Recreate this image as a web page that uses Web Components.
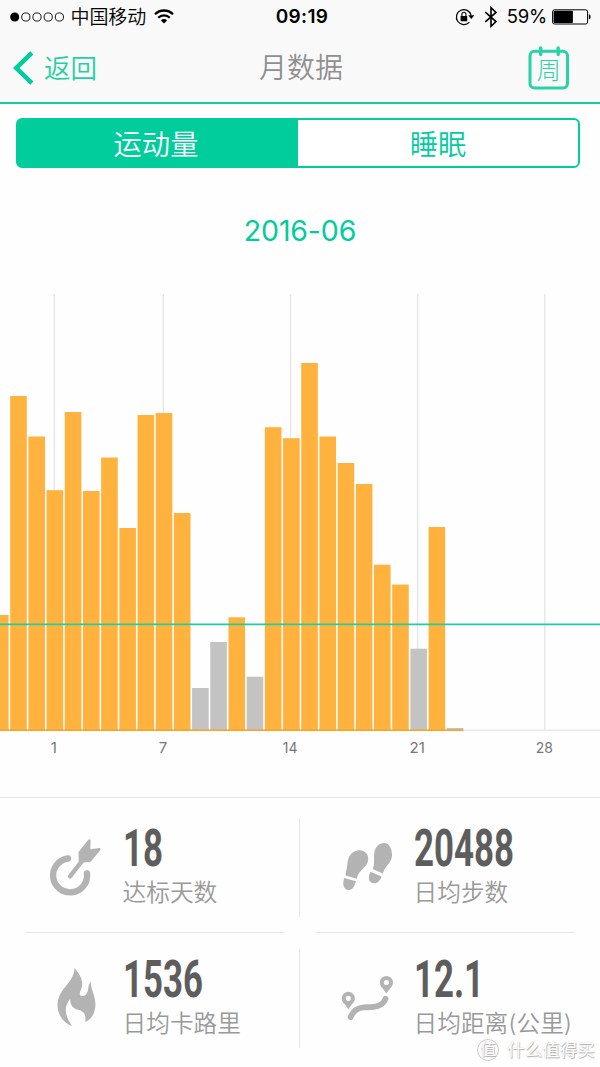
<!DOCTYPE html>
<html lang="zh-CN">
<head>
<meta charset="utf-8">
<title>月数据</title>
<style>
  html, body {
    margin: 0;
    padding: 0;
  }
  body {
    width: 600px;
    height: 1067px;
    overflow: hidden;
    background: #fefefe;
    font-family: Inter, "Noto Sans CJK SC", sans-serif;
    --green: #00cd9b;
    --line: #e4e8e8;
  }
</style>
</head>
<body>
<month-page></month-page>

<script>
function makeTemplate(html) {
  const template = document.createElement('template');
  template.innerHTML = html;
  return template;
}

class BaseElement extends HTMLElement {
  constructor() {
    super();
    const shadow = this.attachShadow({ mode: 'open' });
    shadow.append(this.constructor.template.content.cloneNode(true));
  }
}

class StatusBar extends BaseElement {
  static template = makeTemplate(`
    <style>
    :host {
      display: grid;
      grid-template-columns: 1fr auto 1fr;
      align-items: center;
      height: 33px;
      padding: 0 9px 0 10px;
      color: #000;
      font-size: 19px;
      line-height: 33px;
    }
    .side {
      display: flex;
      align-items: center;
      height: 33px;
    }
    .right {
      justify-content: flex-end;
    }
    .carrier {
      margin: 0 8px 0 6.5px;
      padding-top: 1px;
      font-weight: 350;
      letter-spacing: -0.1px;
    }
    .time {
      font-weight: 600;
      font-size: 19px;
      letter-spacing: 0.3px;
      padding-left: 3px;
    }
    .percent {
      font-size: 18.5px;
      margin: 0 5px 0 9px;
      letter-spacing: -0.2px;
    }
    svg {
      display: block;
      flex: none;
    }
    </style>
    <div class="side">
      <svg width="54" height="10" viewBox="0 0 54 10">
        <circle cx="4.7" cy="5" r="4.5"/>
        <g fill="none" stroke="#000" stroke-width="0.9">
          <circle cx="15.8" cy="5" r="4.1"/><circle cx="27" cy="5" r="4.1"/>
          <circle cx="38.2" cy="5" r="4.1"/><circle cx="49.4" cy="5" r="4.1"/>
        </g>
      </svg>
      <span class="carrier">中国移动</span>
      <svg width="20" height="15" viewBox="0 0 20 15">
        <g fill="none" stroke="#000" stroke-width="2.3">
          <path d="M1 5.2A12.8 12.8 0 0 1 19 5.2"/>
          <path d="M4.2 8.7A8.2 8.2 0 0 1 15.8 8.7"/>
        </g>
        <path d="M6.9 11.4A4.4 4.4 0 0 1 13.1 11.4L10 14.4Z"/>
      </svg>
    </div>
    <div class="time">09:19</div>
    <div class="side right">
      <svg width="20" height="18" viewBox="0 0 20 18">
        <path d="M14.4 14.2A7.5 7.5 0 1 1 16.2 7.4" fill="none" stroke="#000" stroke-width="1.2"/>
        <path d="M13.2 7.3h6.2l-3.1 3.7Z"/>
        <rect x="5.6" y="8" width="6.6" height="5.2" rx="0.5"/>
        <path d="M6.9 8V6.3a2 2 0 0 1 4 0V8" fill="none" stroke="#000" stroke-width="1.1"/>
      </svg>
      <svg width="14" height="22" viewBox="0 0 14 22" style="margin-left: 9px">
        <path d="M1.3 6.2L12 15.6L7 20.3V1.7L12 6.4L1.3 15.8" fill="none" stroke="#000" stroke-width="1.6"/>
      </svg>
      <span class="percent">59%</span>
      <svg width="39" height="16" viewBox="0 0 39 16">
        <rect x="0.6" y="0.8" width="35" height="14.2" rx="2" fill="none" stroke="#000" stroke-width="1"/>
        <rect x="1.6" y="1.8" width="19.3" height="12.2" rx="0.8"/>
        <path d="M36.9 5.2Q38.6 5.6 38.6 7.9T36.9 10.6Z"/>
      </svg>
    </div>
  `);
}

class NavBar extends BaseElement {
  static template = makeTemplate(`
    <style>
    :host {
      display: grid;
      grid-template-columns: 1fr auto 1fr;
      align-items: center;
      height: 69px;
      padding: 0 30px 0 13px;
      border-bottom: 2px solid #1ccaa0;
      font-weight: 350;
      font-size: 26.5px;
      line-height: 67px;
      color: #8f8f8f;
    }
    .back {
      display: flex;
      align-items: center;
      gap: 10px;
      height: 69px;
      color: #1fd0a3;
    }
    .back span {
      padding-top: 1px;
    }
    .title {
      font-size: 28px;
      padding: 1px 0 0 19px;
    }
    .week {
      justify-self: end;
    }
    svg {
      display: block;
    }
    </style>
    <div class="back">
      <svg width="21" height="34" viewBox="0 0 21 34">
        <path d="M18.8 1.8L3.2 17L18.8 32.2" fill="none" stroke="#00cd9b" stroke-width="4.6"/>
      </svg>
      <span><slot name="back"></slot></span>
    </div>
    <div class="title"><slot></slot></div>
    <svg class="week" width="42" height="44" viewBox="0 0 42 44">
      <g fill="none" stroke="#2ad2a7" stroke-linecap="round">
        <rect x="2" y="5.3" width="37.5" height="36.7" rx="4.5" stroke-width="3"/>
        <path d="M12.7 2V8.5M30.2 2V8.5" stroke-width="3.4"/>
      </g>
      <text x="20.8" y="33" text-anchor="middle" font-size="24" font-weight="300" fill="#2ad2a7">周</text>
    </svg>
  `);
}

class SegmentControl extends BaseElement {
  static template = makeTemplate(`
    <style>
    :host {
      display: flex;
      box-sizing: border-box;
      height: 50px;
      margin: 14px 20.5px 0 15.5px;
      border: 2px solid var(--green);
      border-radius: 6px;
      overflow: hidden;
      background: linear-gradient(90deg, var(--green) 50%, #fff 50%);
      font-weight: 350;
      font-size: 28.3px;
      line-height: 50px;
      text-align: center;
      color: var(--green);
    }
    .on, .off {
      flex: 1;
    }
    .on {
      color: #fff;
      text-indent: -3px;
    }
    .off {
      text-indent: 1px;
    }
    </style>
    <div class="on"><slot name="active"></slot></div>
    <div class="off"><slot></slot></div>
  `);
}

// y of each bar's upper edge inside the 600x517 plot, bars stand on y = 450
const bars = [
  335, 116, 156.5, 210.2, 132, 211, 177.5, 248, 135, 133, 233, 408, 362,
  337.3, 396.7, 147.2, 158.2, 83, 156.5, 183, 204, 284.7, 304.6, 368.7, 247, 448
];
// a bar that stays under the goal line is grey
const goalY = 344.3;
const days = [[1, 54.3], [7, 163.3], [14, 290.5], [21, 417.6], [28, 544.8]];

class MonthChart extends BaseElement {
  static template = makeTemplate(`
    <style>
    :host {
      display: block;
      height: 517px;
    }
    svg {
      display: block;
    }
    text {
      font-size: 15px;
      fill: #777;
      text-anchor: middle;
    }
    text.small {
      font-size: 14px;
    }
    </style>
    <svg width="600" height="517" viewBox="0 0 600 517"></svg>
  `);

  connectedCallback() {
    const step = 18.19;
    const left = 10.2 - step;
    const grid = days.map(([, x]) =>
      `<path d="M${x} 14V450" stroke="#e6e6e6" stroke-width="1.4"/>`);
    const rects = bars.map((y, i) =>
      `<rect x="${(left + i * step).toFixed(2)}" y="${y}" width="16.6" height="${450 - y}" fill="${y > goalY ? '#c3c3c3' : '#ffb23e'}"/>`);
    const labels = days.map(([day, x]) =>
      `<text x="${x - 0.4}" y="473.3"${day === 28 || day === 14 ? ' class="small"' : ''}>${day}</text>`);
    this.shadowRoot.querySelector('svg').innerHTML = `
      ${grid.join('')}
      <path d="M463 450.2H600" stroke="#e6e6e6" stroke-width="1.3"/>
      ${rects.join('')}
      <path d="M0 450.2H463.3" stroke="#f5a327" stroke-width="1.5"/>
      <path d="M0 ${goalY}H600" stroke="#1fcfa0" stroke-width="1.8"/>
      ${labels.join('')}
    `;
  }
}

class StatItem extends BaseElement {
  static template = makeTemplate(`
    <style>
    :host {
      display: flex;
      box-sizing: border-box;
      align-items: flex-start;
      height: 131px;
      padding: 26px 0 0 var(--indent, 45px);
    }
    .text {
      padding-left: 17.5px;
      margin-top: var(--lift, 0);
    }
    .value {
      display: block;
      height: 49px;
      width: 120px;
      font: 700 52px/49px Roboto, sans-serif;
      color: #5d5d5d;
      transform: scaleX(0.67);
      transform-origin: 0 0;
      white-space: nowrap;
    }
    .label {
      display: block;
      margin-top: 3px;
      font-weight: 350;
      font-size: 23.7px;
      line-height: 34px;
      color: #999;
      white-space: nowrap;
    }
    ::slotted(svg) {
      display: block;
      flex: none;
      width: 60px;
      height: 80px;
    }
    </style>
    <slot name="icon"></slot>
    <div class="text">
      <span class="value"><slot name="value"></slot></span>
      <span class="label"><slot></slot></span>
    </div>
  `);
}

class StatGrid extends BaseElement {
  static template = makeTemplate(`
    <style>
    :host {
      display: grid;
      grid-template-columns: 299px 1px 300px;
      grid-template-rows: 134px 1.5px 134px;
      border-top: 1.5px solid var(--line);
    }
    .v {
      width: 1px;
      height: 99px;
      margin-top: 20px;
      background: var(--line);
    }
    .v.low {
      margin-top: 16px;
    }
    .h {
      margin: 0 15px 0 26px;
      background: var(--line);
    }
    .h.right {
      margin: 0 26px 0 16px;
    }
    </style>
    <slot name="a"></slot><div class="v"></div><slot name="b"></slot>
    <div class="h"></div><div></div><div class="h right"></div>
    <slot name="c"></slot><div class="v low"></div><slot name="d"></slot>
  `);
}

class WaterMark extends BaseElement {
  static template = makeTemplate(`
    <style>
    :host {
      position: absolute;
      left: 477px;
      top: 1037px;
      display: flex;
      align-items: center;
      gap: 8px;
      font-size: 17.6px;
      line-height: 26px;
      color: #fff;
      text-shadow: 0.7px 0.7px 1px #aaa, 0 0 1px #ccc;
      white-space: nowrap;
    }
    .badge {
      width: 20px;
      height: 20px;
      border: 1px solid #ccc;
      border-radius: 50%;
      line-height: 19px;
      font-size: 16px;
      text-align: center;
    }
    </style>
    <span class="badge">值</span><span>什么值得买</span>
  `);
}

class MonthPage extends BaseElement {
  static template = makeTemplate(`
    <style>
    :host {
      display: flex;
      flex-direction: column;
      position: relative;
      width: 600px;
      height: 1067px;
      overflow: hidden;
    }
    header {
      background: #f9f9f9;
    }
    .month {
      margin-top: 43px;
      height: 69px;
      line-height: 40px;
      font-size: 28.5px;
      letter-spacing: -0.15px;
      text-align: center;
      color: var(--green);
    }
    stat-item:nth-of-type(even) {
      --indent: 36px;
    }
    stat-item:nth-of-type(n+3) {
      --lift: -4px;
    }
    </style>
    <header>
      <status-bar></status-bar>
      <nav-bar><span slot="back">返回</span>月数据</nav-bar>
    </header>
    <segment-control><span slot="active">运动量</span>睡眠</segment-control>
    <div class="month">2016-06</div>
    <month-chart></month-chart>
    <stat-grid>
      <stat-item slot="a">
        <svg slot="icon" viewBox="45 824 60 80">
          <g fill="none" stroke="#b3b3b3" stroke-linecap="round">
            <path d="M68 858.5A17 17 0 1 0 87 873.5" stroke-width="6.4"/>
            <path d="M70 876.3L82 861" stroke-width="4.4"/>
          </g>
          <path d="M78.5 852L88.5 839.5Q90.5 838.5 90.6 841L90.3 849.2L99.5 848Q101.5 848.5 100 850.5L91.3 861Q90.5 862 89 862L83.5 862.5L78.8 864Z" fill="#b3b3b3"/>
        </svg>
        <span slot="value">18</span>达标天数
      </stat-item>
      <stat-item slot="b">
        <svg slot="icon" viewBox="336 824 60 80">
          <g fill="#b3b3b3">
            <path d="M345.5 875.5C346 871 346.8 869 347.4 863.5C348.2 855.5 353 850.3 359.5 850.3C366 850.3 369.2 856 368 861C366.7 866.5 361.5 869.5 358.8 873.5Q357.3 876 356.7 878.7Z"/>
            <path d="M344.3 878L355.8 881.2C355 886 352.5 889.8 348.8 889.9C344 889.8 341.8 885.5 344.3 878Z"/>
            <path d="M372.7 869C374.5 864.5 374 862 374 856C374 848 378.5 843 384 843C389.5 843.2 392.2 849 392 855.5C391.8 862 387 865 384.3 869.5L382.8 873.4Z"/>
            <path d="M370.5 871.8L381.6 876.4C380.2 880.5 377.5 883.3 373.8 883.3C368.8 883 367.3 878 370.5 871.8Z"/>
          </g>
        </svg>
        <span slot="value">20488</span>日均步数
      </stat-item>
      <stat-item slot="c">
        <svg slot="icon" viewBox="45 960 60 80">
          <path d="M74.5 969C79.5 975 83.5 981 81.8 988C80.5 993 79 994 80 996C81.5 998 86.5 997.5 87.8 992C88.5 988 88.5 985.5 90.5 982.5C91 991 96 998 95.4 1006.5C95 1015 91 1020.5 85.3 1023C86 1016 84.5 1012.5 79 1011C73 1009.5 70 1006.5 70.3 999.5C64.5 1006.5 63.5 1015 72 1027C62 1023.5 56.5 1013 57.6 1004C59.5 988.5 74 984 74.5 969Z" fill="#b3b3b3"/>
        </svg>
        <span slot="value">1536</span>日均卡路里
      </stat-item>
      <stat-item slot="d">
        <svg slot="icon" viewBox="336 960 60 80">
          <g fill="none" stroke="#b3b3b3">
            <path d="M350.6 1018C353 1012.5 357.5 1008.6 364 1008.3C372 1008 382 1009 385.5 999.8" stroke-width="5.8" stroke-linecap="round"/>
            <circle cx="348.3" cy="999.3" r="4.6" stroke-width="4"/>
            <circle cx="386.4" cy="983.5" r="4.6" stroke-width="4"/>
          </g>
          <path d="M342.5 1002.2L346 1004H350.7L354.1 1002.2L348.3 1010.2ZM380.6 986.4L384 988.2H388.8L392.2 986.4L386.4 994.4Z" fill="#b3b3b3"/>
        </svg>
        <span slot="value">12.1</span>日均距离(公里)
      </stat-item>
    </stat-grid>
    <water-mark></water-mark>
  `);
}

customElements.define('status-bar', StatusBar);
customElements.define('nav-bar', NavBar);
customElements.define('segment-control', SegmentControl);
customElements.define('month-chart', MonthChart);
customElements.define('stat-item', StatItem);
customElements.define('stat-grid', StatGrid);
customElements.define('water-mark', WaterMark);
customElements.define('month-page', MonthPage);
</script>
</body>
</html>
